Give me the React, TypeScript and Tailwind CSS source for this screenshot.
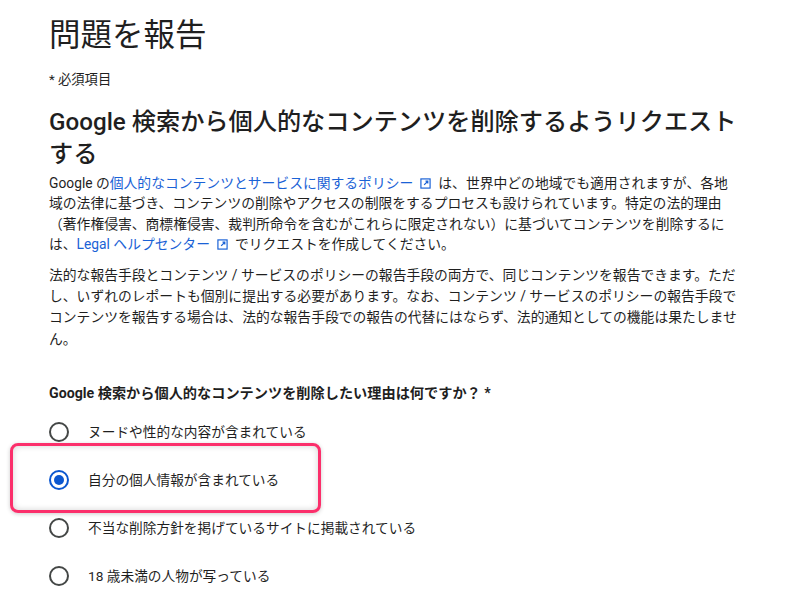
import React from "react";

const font = { fontFamily: 'Roboto, "Noto Sans CJK JP", sans-serif' };

function ExtIcon() {
  return (
    <svg width="11" height="11" viewBox="0 0 12 12" className="inline-block mx-[7px] align-[-1px]">
      <rect x="1" y="1" width="10" height="10" fill="none" stroke="#1a62d6" strokeWidth="1.3" />
      <path d="M4.5 7.5 L8.5 3.5 M6 3.5 H8.5 V6" fill="none" stroke="#1a62d6" strokeWidth="1.3" />
    </svg>
  );
}

function Radio({ checked }: { checked?: boolean }) {
  return (
    <span
      className={
        "flex items-center justify-center w-[20px] h-[20px] rounded-full border-2 shrink-0 " +
        (checked ? "border-[#0b57d0]" : "border-[#444746]")
      }
    >
      {checked && <span className="w-[10px] h-[10px] rounded-full bg-[#0b57d0]" />}
    </span>
  );
}

function Option({ label, checked }: { label: string; checked?: boolean }) {
  return (
    <div className="flex items-center h-[48px] pl-[49px] gap-[19px]">
      <Radio checked={checked} />
      <span className="text-[13.7px] text-[#1f1f1f]">{label}</span>
    </div>
  );
}

export default function App() {
  return (
    <div className="w-[788px] h-[614px] bg-white overflow-hidden text-[#1f1f1f]" style={font}>
      <div className="pl-[49px] pr-[30px]">
        <h1 className="text-[31.5px] font-normal leading-[40px] pt-[16px] text-[#1f1f1f]">問題を報告</h1>
        <div className="text-[13.3px] mt-[14px] leading-[20px]">* 必須項目</div>
        <h2 className="text-[24.2px] font-medium leading-[32px] mt-[16px] text-[#1f1f1f]">
          Google 検索から個人的なコンテンツを削除するようリクエスト
          <br />
          する
        </h2>
        <p className="text-[13.8px] leading-[20.4px] mt-[3px]">
          Google の<a className="text-[#1a62d6]">個人的なコンテンツとサービスに関するポリシー</a>
          <ExtIcon />
          は、世界中どの地域でも適用されますが、各地
          <br />
          域の法律に基づき、コンテンツの削除やアクセスの制限をするプロセスも設けられています。特定の法的理由
          <br />
          （著作権侵害、商標権侵害、裁判所命令を含むがこれらに限定されない）に基づいてコンテンツを削除するに
          <br />
          は、<a className="text-[#1a62d6]">Legal ヘルプセンター</a>
          <ExtIcon />
          でリクエストを作成してください。
        </p>
        <p className="text-[13.8px] leading-[21.3px] mt-[10px]">
          法的な報告手段とコンテンツ / サービスのポリシーの報告手段の両方で、同じコンテンツを報告できます。ただ
          <br />
          し、いずれのレポートも個別に提出する必要があります。なお、コンテンツ / サービスのポリシーの報告手段で
          <br />
          コンテンツを報告する場合は、法的な報告手段での報告の代替にはならず、法的通知としての機能は果たしませ
          <br />
          ん。
        </p>
        <div className="text-[14.2px] font-bold leading-[20px] mt-[33px]">
          Google 検索から個人的なコンテンツを削除したい理由は何ですか？ *
        </div>
      </div>
      <div className="mt-[5px]">
        <Option label="ヌードや性的な内容が含まれている" />
        <div className="relative">
          <Option label="自分の個人情報が含まれている" checked />
          <div className="absolute left-[10px] top-[-13px] w-[311px] h-[70px] rounded-[8px] border-[3px] border-[#fb2f6b] shadow-[inset_0_0_6px_rgba(0,0,0,0.18),0_1px_4px_rgba(0,0,0,0.2)] pointer-events-none" />
        </div>
        <Option label="不当な削除方針を掲げているサイトに掲載されている" />
        <Option label="18 歳未満の人物が写っている" />
      </div>
    </div>
  );
}
